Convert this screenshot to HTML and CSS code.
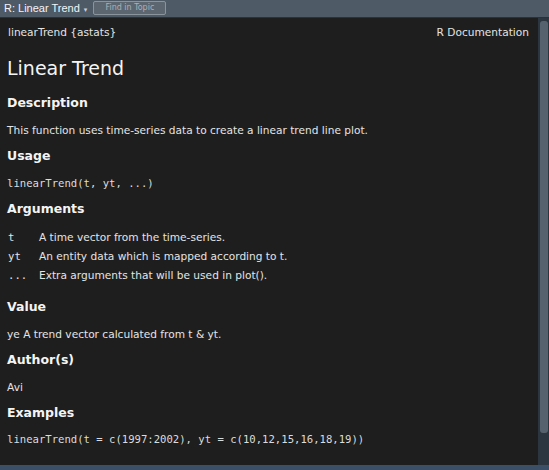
FILE: index.html
```html
<!DOCTYPE html>
<html>
<head>
<meta charset="utf-8">
<link rel="stylesheet" href="styles.css">
</head>
<body>
<div class="topbar">
  <span class="tab-title">R: Linear Trend</span>
  <span class="caret">&#9662;</span>
  <span class="find">Find in Topic</span>
</div>
<div class="main">
  <div class="doc">
    <div class="docline"><span>linearTrend {astats}</span><span>R Documentation</span></div>
    <h1>Linear Trend</h1>
    <h2>Description</h2>
    <p>This function uses time-series data to create a linear trend line plot.</p>
    <h2>Usage</h2>
    <p class="code">linearTrend(t, yt, ...)</p>
    <h2>Arguments</h2>
    <div class="args">
      <span class="an">t</span><span>A time vector from the time-series.</span>
      <span class="an">yt</span><span>An entity data which is mapped according to t.</span>
      <span class="an">...</span><span>Extra arguments that will be used in plot().</span>
    </div>
    <h2 class="after-args">Value</h2>
    <p>ye A trend vector calculated from t &amp; yt.</p>
    <h2>Author(s)</h2>
    <p>Avi</p>
    <h2>Examples</h2>
    <p class="code last">linearTrend(t = c(1997:2002), yt = c(10,12,15,16,18,19))</p>
  </div>
  <div class="scroll"><div class="thumb"></div></div>
</div>
<div class="bottombar"></div>
</body>
</html>
```
FILE: styles.css
```css
html, body {
  margin: 0;
  padding: 0;
  height: 470px;
  overflow: hidden;
  background: #1e1e1e;
  font-family: "DejaVu Sans", sans-serif;
}
body {
  display: flex;
  flex-direction: column;
}
.topbar {
  height: 17px;
  background: #4e5a66;
  border-bottom: 1px solid #28323c;
  display: flex;
  align-items: center;
  padding-left: 4px;
  color: #f2f4f6;
  font-size: 11px;
  flex-shrink: 0;
}
.tab-title {
  line-height: 17px;
  font-family: "Liberation Sans", Arial, sans-serif;
}
.caret {
  font-size: 7px;
  color: #c9ced3;
  margin-left: 4px;
  margin-top: 2px;
}
.find {
  margin-left: 6px;
  width: 71px;
  height: 12px;
  border: 1px solid #8a949d;
  border-radius: 2px;
  background: #5b6671;
  color: #a9b1b8;
  font-size: 8px;
  line-height: 12px;
  text-align: center;
  margin-top: -2px;
}
.main {
  flex: 1;
  display: flex;
  min-height: 0;
}
.doc {
  flex: 1;
  padding: 7px 9px 0 7px;
  color: #e4e4e4;
  font-size: 10.6px;
}
.docline {
  display: flex;
  justify-content: space-between;
  line-height: 14px;
  padding-left: 1px;
}
h1 {
  margin: 17px 0 0;
  font-size: 19px;
  font-weight: normal;
  line-height: 24px;
  color: #f4f4f4;
}
h2 {
  margin: 15px 0 0;
  font-size: 12.5px;
  font-weight: bold;
  line-height: 16px;
  color: #f4f4f4;
}
h1 + h2 { margin-top: 15px; }
p + h2 { margin-top: 11px; }
p {
  margin: 12px 0 0;
  line-height: 14px;
}
.code {
  font-family: "DejaVu Sans Mono", monospace;
  font-size: 10.6px;
  color: #dcdcdc;
}
.code.last { margin-top: 11px; }
.args {
  margin-top: 10px;
  display: grid;
  grid-template-columns: 32px auto;
  grid-auto-rows: 19px;
  align-items: center;
}
.an {
  font-family: "DejaVu Sans Mono", monospace;
  font-size: 10.6px;
  padding-left: 1px;
}
h2.after-args { margin-top: 15px; }
.scroll {
  width: 11px;
  background: #2c3640;
  padding: 3px 1px 0 2px;
  box-sizing: border-box;
  flex-shrink: 0;
}
.thumb {
  height: 412px;
  background: #56636e;
  border-radius: 3px;
}
.bottombar {
  height: 5px;
  background: #3b5066;
  flex-shrink: 0;
}
```
